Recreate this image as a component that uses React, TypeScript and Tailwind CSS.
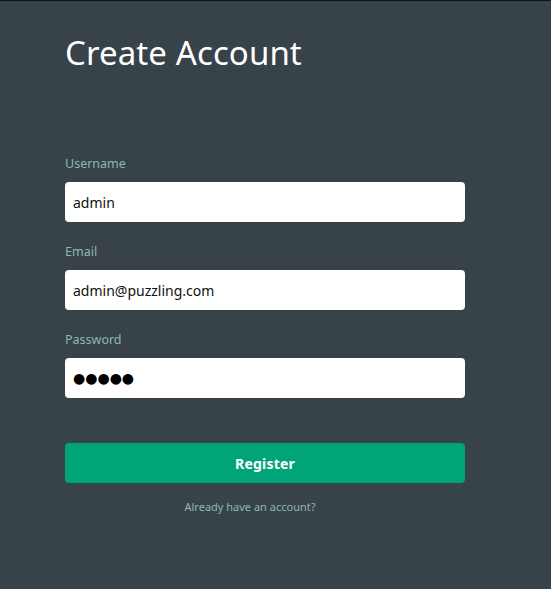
import React from 'react';

const Field: React.FC<{ label: string; value: string; dots?: boolean }> = ({ label, value, dots }) => (
    <div className="flex flex-col">
        <label className="text-[12.5px] leading-[18px] text-[#8dbaa9] mb-[9px]">{label}</label>
        <input
            type="text"
            defaultValue={value}
            readOnly
            className={
                dots
                    ? "h-10 w-full rounded-[4px] bg-white px-2 text-[14px] text-black outline-none font-['DejaVu_Sans']"
                    : 'h-10 w-full rounded-[4px] bg-white px-2 text-[14px] text-[#111] outline-none'
            }
        />
    </div>
);

const App: React.FC = () => {
    return (
        <div
            className="min-h-[589px] w-full bg-[#374249] border-t border-[#111]"
            style={{ fontFamily: '"Noto Sans", "Open Sans", sans-serif' }}
        >
            <div className="w-[400px] ml-[65px] pt-[30px]">
                <h1 className="text-[33px] leading-[44px] text-white tracking-[0.1px]">Create Account</h1>

                <form className="mt-[80px] flex flex-col gap-[21px]">
                    <Field label="Username" value="admin" />
                    <Field label="Email" value="admin@puzzling.com" />
                    <Field label="Password" value="●●●●●" dots />

                    <button
                        type="button"
                        className="mt-[24px] h-10 w-full rounded-[4px] bg-[#01a477] text-[14px] font-bold tracking-[0.2px] text-white"
                    >
                        Register
                    </button>
                </form>

                <div className="mt-[10px] w-[370px] text-center">
                    <a className="text-[11px] text-[#8dbaa9]">Already have an account?</a>
                </div>
            </div>
        </div>
    );
};

export default App;
